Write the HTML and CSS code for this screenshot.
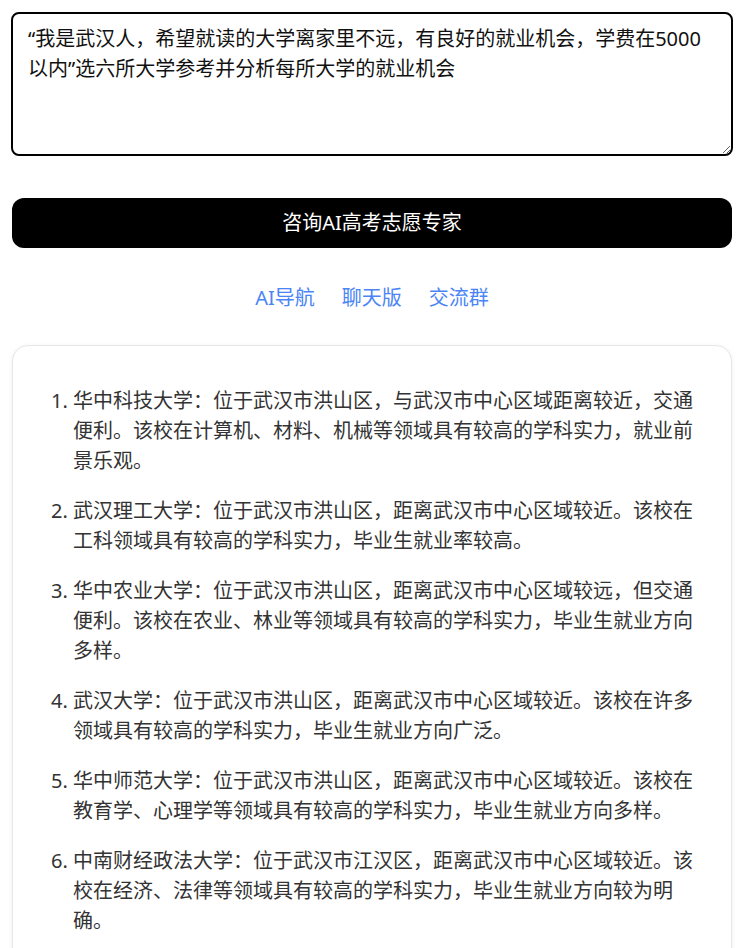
FILE: index.html
```html
<!DOCTYPE html>
<html lang="zh-CN">
<head>
<meta charset="utf-8">
<title>AI高考志愿专家</title>
<link rel="stylesheet" href="styles.css">
</head>
<body>
<main class="page">
  <textarea class="question" rows="4" autofocus>“我是武汉人，希望就读的大学离家里不远，有良好的就业机会，学费在5000以内”选六所大学参考并分析每所大学的就业机会
</textarea>
  <button class="ask-btn" type="button">咨询AI高考志愿专家</button>
  <nav class="links">
    <a href="#">AI导航</a>
    <a href="#">聊天版</a>
    <a href="#">交流群</a>
  </nav>
  <section class="answer">
    <ol class="answer-list">
      <li><p>华中科技大学：位于武汉市洪山区，与武汉市中心区域距离较近，交通便利。该校在计算机、材料、机械等领域具有较高的学科实力，就业前景乐观。</p></li>
      <li><p>武汉理工大学：位于武汉市洪山区，距离武汉市中心区域较近。该校在工科领域具有较高的学科实力，毕业生就业率较高。</p></li>
      <li><p>华中农业大学：位于武汉市洪山区，距离武汉市中心区域较远，但交通便利。该校在农业、林业等领域具有较高的学科实力，毕业生就业方向多样。</p></li>
      <li><p>武汉大学：位于武汉市洪山区，距离武汉市中心区域较近。该校在许多领域具有较高的学科实力，毕业生就业方向广泛。</p></li>
      <li><p>华中师范大学：位于武汉市洪山区，距离武汉市中心区域较近。该校在教育学、心理学等领域具有较高的学科实力，毕业生就业方向多样。</p></li>
      <li><p>中南财经政法大学：位于武汉市江汉区，距离武汉市中心区域较近。该校在经济、法律等领域具有较高的学科实力，毕业生就业方向较为明确。</p></li>
    </ol>
  </section>
</main>
<script src="script.js"></script>
</body>
</html>
```

FILE: styles.css
```css
* {
  box-sizing: border-box;
}

html, body {
  margin: 0;
  padding: 0;
  background: #ffffff;
}

body {
  font-family: "Noto Sans", "Noto Sans CJK SC", sans-serif;
  font-size: 20px;
  line-height: 30px;
  color: #333333;
}

.page {
  width: 720px;
  margin-left: 12px;
  padding-top: 12px;
  display: flex;
  flex-direction: column;
}

.question {
  display: block;
  width: 722px;
  height: 144px;
  margin: 0 -1px;
  padding: 10px 20px 10px 15px;
  border: 2px solid #000000;
  border-radius: 8px;
  font-family: "Noto Sans", "Noto Sans CJK SC", sans-serif;
  font-size: 20px;
  line-height: 30px;
  color: #111111;
  caret-color: #000000;
  background: #ffffff;
  outline: none;
}

.ask-btn {
  margin-top: 42px;
  height: 50px;
  width: 100%;
  border: none;
  border-radius: 12px;
  background: #000000;
  color: #ffffff;
  font-family: "Noto Sans", "Noto Sans CJK SC", sans-serif;
  font-size: 20px;
  line-height: 30px;
  cursor: pointer;
}

.links {
  margin-top: 35px;
  display: flex;
  justify-content: center;
  gap: 27px;
  line-height: 30px;
}

.links a {
  color: #4a84f5;
  text-decoration: none;
}

.answer {
  margin-top: 32px;
  border: 1px solid #e6e7eb;
  border-radius: 16px;
  box-shadow: 0 1px 4px rgba(0, 0, 0, 0.07);
  padding: 20px;
  background: #ffffff;
}

.answer-list {
  margin: 2px 0 0;
  padding-left: 40px;
}

.answer-list li p {
  margin: 20px 0;
}
```

FILE: script.js
```js
const q = document.querySelector('.question');
q.focus();
q.setSelectionRange(q.value.length, q.value.length);
```
